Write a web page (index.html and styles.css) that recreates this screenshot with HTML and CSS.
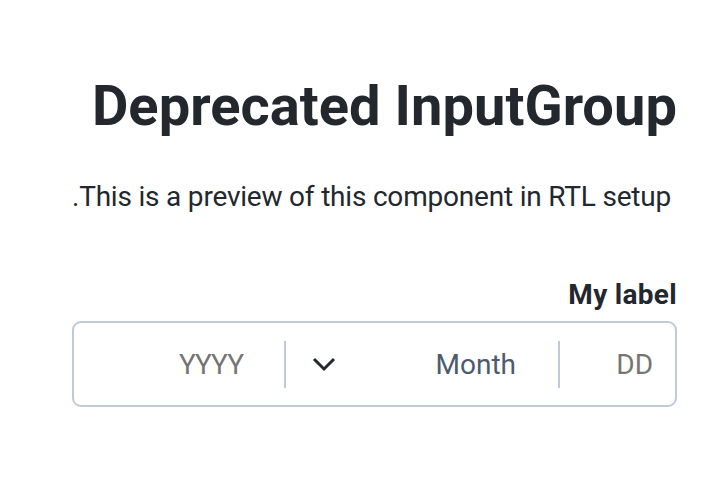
FILE: index.html
```html
<!DOCTYPE html>
<html lang="en" dir="rtl">
<head>
<meta charset="utf-8">
<link rel="stylesheet" href="styles.css">
</head>
<body>
<main class="page">
  <h1 class="title">Deprecated InputGroup</h1>
  <p class="lead">This is a preview of this component in RTL setup.</p>
  <div class="field">
    <label class="label">My label</label>
    <div class="group">
      <div class="seg seg-dd"><span class="ph">DD</span></div>
      <div class="sep"></div>
      <div class="seg seg-month">
        <span class="month">Month</span>
        <svg class="chev" width="24" height="16" viewBox="0 0 24 16"><path d="M2 3 L12 13 L22 3" fill="none" stroke="#23272e" stroke-width="3"/></svg>
      </div>
      <div class="sep"></div>
      <div class="seg seg-yyyy"><span class="ph">YYYY</span></div>
    </div>
  </div>
</main>
</body>
</html>
```
FILE: styles.css
```css
html, body { margin: 0; padding: 0; background: #fff; }
body { font-family: Roboto, "Liberation Sans", sans-serif; color: #23272e; }
.page { margin: 0 41px 0 72px; padding-top: 70px; }
.title { margin: 0; font-size: 56px; font-weight: 700; line-height: 72px; letter-spacing: 0.05px; }
.lead { margin: 39px 0 0; font-size: 28px; line-height: 32px; font-weight: 400; padding-right: 6px; letter-spacing: -0.2px; white-space: nowrap; }
.field { margin-top: 66px; display: flex; flex-direction: column; }
.label { font-size: 28px; font-weight: 700; line-height: 32px; margin-bottom: 10px; letter-spacing: 0.3px; }
.group { display: flex; align-items: center; height: 82px; border: 2px solid #bfcad8; border-radius: 9px; }
.seg { display: flex; align-items: center; height: 100%; font-size: 28px; }
.seg-dd { width: 115px; padding-right: 22px; box-sizing: border-box; }
.seg-month { width: 272px; padding-right: 42px; box-sizing: border-box; justify-content: space-between; padding-left: 26px; }
.seg-yyyy { flex: 1; padding-right: 41px; }
.seg-yyyy .ph { letter-spacing: -1px; }
.sep { width: 2px; height: 47px; background: #bfcad8; }
.ph { color: #757575; }
.month { color: #4d5b6e; }
.chev { display: block; }
```
